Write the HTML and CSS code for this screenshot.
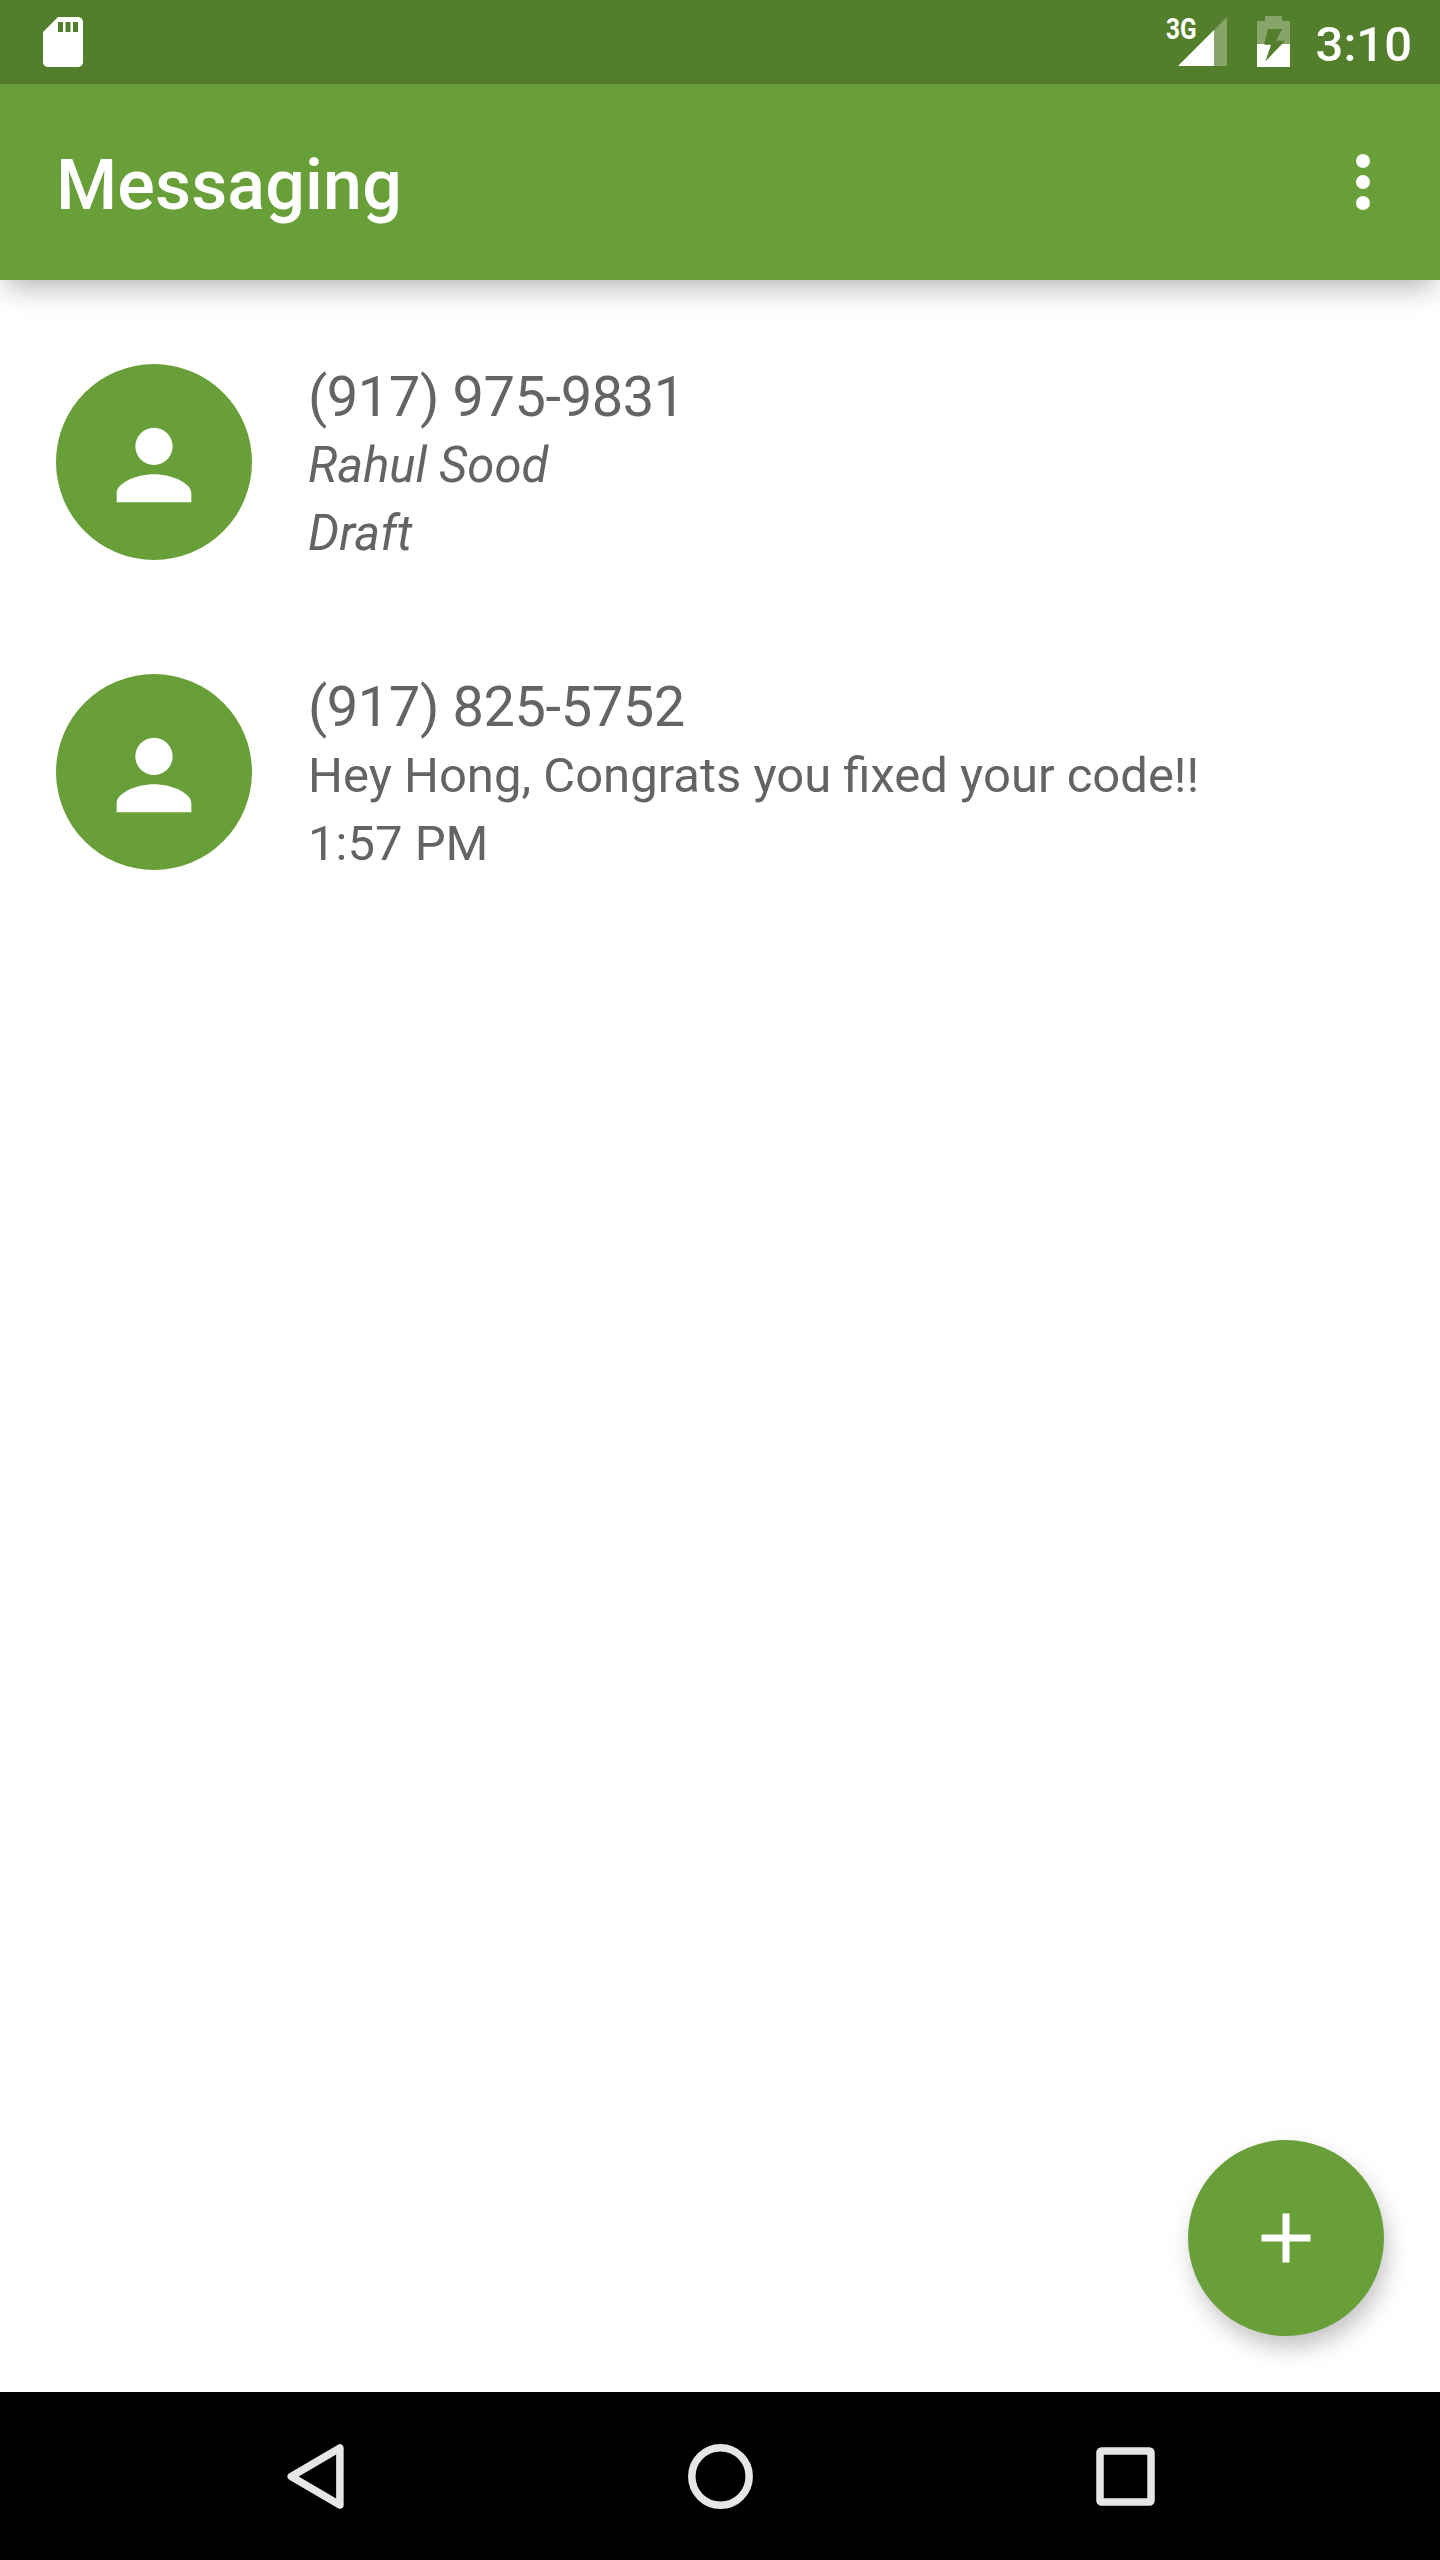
FILE: index.html
```html
<!DOCTYPE html>
<html lang="en">
<head>
<meta charset="utf-8">
<title>Messaging</title>
<link rel="stylesheet" href="styles.css">
</head>
<body>
<div class="screen">
  <div class="status-bar">
    <svg class="sd-icon" viewBox="0 0 24 24"><path d="M18 2h-8L4 8v12c0 1.1.9 2 2 2h12c1.1 0 2-.9 2-2V4c0-1.1-.9-2-2-2zm-6 6h-2V4h2v4zm3 0h-2V4h2v4zm3 0h-2V4h2v4z"/></svg>
    <div class="status-right">
      <span class="network"><span class="network-label">3G</span></span>
      <svg class="signal" viewBox="0 0 49 49"><path class="dim" d="M36 13L49 0v49H36z"/><path d="M0 49L36 13v36z"/></svg>
      <svg class="battery" viewBox="0 0 33 51"><path class="dim" fill-rule="evenodd" d="M8 0h17v5h8v23H25L28 24.700H19L25.300 13H11L7.300 28H0V5h8z"/><path fill-rule="evenodd" d="M0 28h7.500v.700H14L8.300 45.500 25 28h8v23H0z"/></svg>
      <span class="clock">3:10</span>
    </div>
  </div>
  <header class="app-bar">
    <h1 class="title">Messaging</h1>
    <svg class="overflow" viewBox="0 0 14 56"><circle cx="7" cy="7" r="7"/><circle cx="7" cy="28" r="7"/><circle cx="7" cy="49" r="7"/></svg>
  </header>
  <main class="list">
    <div class="row">
      <div class="avatar"><svg class="person" viewBox="0 0 24 24"><path d="M12 12c2.210 0 4-1.790 4-4s-1.790-4-4-4-4 1.790-4 4 1.790 4 4 4zm0 2c-4 0-8 2-8 4v2h16v-2c0-2-4-4-8-4z"/></svg></div>
      <div class="texts">
        <div class="number">(917) 975-9831</div>
        <div class="line draft">Rahul Sood</div>
        <div class="line draft">Draft</div>
      </div>
    </div>
    <div class="row">
      <div class="avatar"><svg class="person" viewBox="0 0 24 24"><path d="M12 12c2.210 0 4-1.790 4-4s-1.790-4-4-4-4 1.790-4 4 1.790 4 4 4zm0 2c-4 0-8 2-8 4v2h16v-2c0-2-4-4-8-4z"/></svg></div>
      <div class="texts">
        <div class="number">(917) 825-5752</div>
        <div class="line">Hey Hong, Congrats you fixed your code!!</div>
        <div class="line">1:57 PM</div>
      </div>
    </div>
    <div class="fab"><svg class="plus" viewBox="0 0 24 24"><path d="M19 13h-6v6h-2v-6H5v-2h6V5h2v6h6v2z"/></svg></div>
  </main>
  <nav class="nav-bar">
    <svg class="nav-icon" viewBox="0 0 66 66"><path d="M57.900 5v57L9.200 33.500z"/></svg>
    <svg class="nav-icon" viewBox="0 0 66 66"><circle cx="33.500" cy="33.500" r="28.700"/></svg>
    <svg class="nav-icon" viewBox="0 0 66 66"><rect x="8" y="8" width="51" height="51" rx="1.500"/></svg>
  </nav>
</div>
</body>
</html>
```
FILE: styles.css
```css
body {
  margin: 0;
  background: #fff;
  font-family: Roboto, "Liberation Sans", sans-serif;
}

svg {
  display: block;
  flex: none;
  fill: #fff;
}

.screen {
  display: flex;
  flex-direction: column;
  width: 1440px;
  height: 2560px;
  overflow: hidden;
}

.status-bar {
  display: flex;
  justify-content: space-between;
  align-items: flex-start;
  box-sizing: border-box;
  height: 84px;
  padding: 0 28px 0 33px;
  background: #537e2c;
  color: #fff;
}

.sd-icon {
  width: 60px;
  height: 60px;
  margin-top: 12px;
}

.status-right {
  display: flex;
  align-items: flex-start;
}

.network {
  width: 12px;
  margin-top: 11px;
  white-space: nowrap;
}

.network-label {
  display: inline-block;
  font-size: 29px;
  line-height: 36px;
  font-weight: 700;
  transform: scaleX(0.84);
  transform-origin: left;
}

.signal {
  width: 49px;
  height: 49px;
  margin-top: 17px;
}

.battery {
  width: 33px;
  height: 51px;
  margin: 16px 26px 0 30px;
}

.dim {
  fill-opacity: 0.3;
}

.clock {
  font-size: 49px;
  line-height: 58px;
  font-weight: 500;
  margin-top: 16px;
}

.app-bar {
  position: relative;
  display: flex;
  justify-content: space-between;
  align-items: center;
  box-sizing: border-box;
  height: 196px;
  padding: 0 70px 0 56px;
  background: #689f38;
  box-shadow: 0 12px 28px -6px rgba(0, 0, 0, 0.32);
}

.title {
  margin: 5px 0 0;
  color: #fff;
  font-size: 70px;
  line-height: 82px;
  font-weight: 500;
  letter-spacing: 0.15px;
}

.overflow {
  width: 14px;
  height: 56px;
}

.list {
  position: relative;
  flex: 1;
  padding-top: 29px;
}

.row {
  display: flex;
  gap: 56px;
  box-sizing: border-box;
  height: 310px;
  padding: 55px 56px 0;
}

.avatar {
  display: flex;
  justify-content: center;
  align-items: center;
  flex: none;
  width: 196px;
  height: 196px;
  border-radius: 50%;
  background: #689f38;
}

.person {
  width: 112px;
  height: 112px;
  margin-top: 5px;
}

.texts {
  color: #646464;
}

.number {
  font-size: 56px;
  line-height: 66px;
  padding-bottom: 2px;
  letter-spacing: -0.42px;
}

.line {
  font-size: 49px;
  line-height: 68px;
}

.draft {
  font-style: italic;
}

.fab {
  position: absolute;
  right: 56px;
  bottom: 56px;
  display: flex;
  justify-content: center;
  align-items: center;
  width: 196px;
  height: 196px;
  border-radius: 50%;
  background: #689f38;
  box-shadow: 4px 12px 24px -2px rgba(0, 0, 0, 0.26);
}

.plus {
  width: 84px;
  height: 84px;
}

.nav-bar {
  display: flex;
  align-items: center;
  justify-content: center;
  gap: 339px;
  height: 168px;
  background: #000;
}

.nav-icon {
  width: 66px;
  height: 66px;
  fill: none;
  stroke: #e6e6e6;
  stroke-width: 7.5;
  stroke-linejoin: round;
}
```
